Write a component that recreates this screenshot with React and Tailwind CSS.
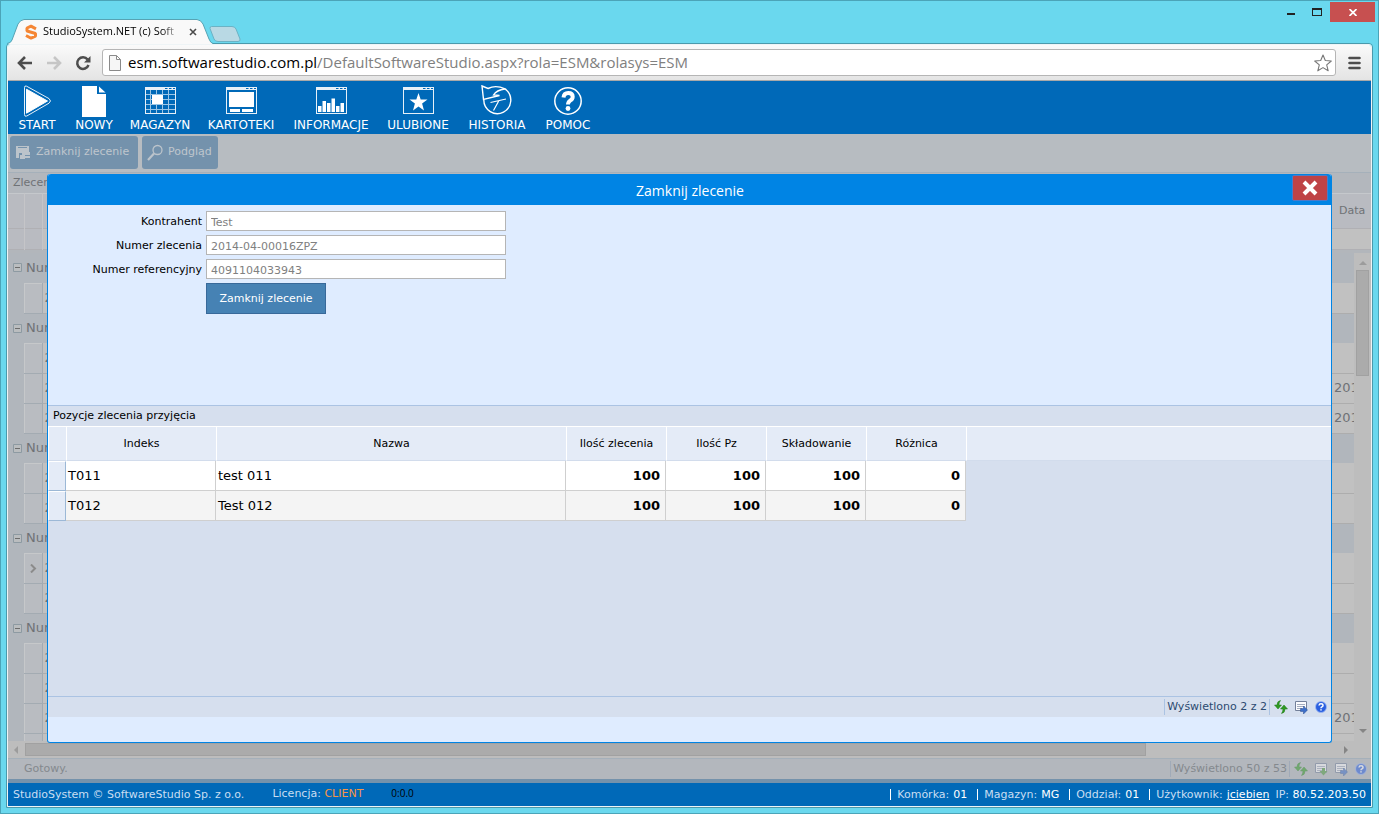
import { useState } from "react";

const orders = [
    { group: "Num", rows: [{ nr: "2", data: "" }] },
    { group: "Num", rows: [{ nr: "2", data: "" }, { nr: "2", data: "201" }, { nr: "2", data: "201" }] },
    { group: "Num", rows: [{ nr: "2", data: "" }, { nr: "2", data: "" }] },
    { group: "Num", rows: [{ nr: "2", data: "", active: true }, { nr: "2", data: "" }] },
    { group: "Num", rows: [{ nr: "2", data: "" }, { nr: "2", data: "" }, { nr: "2", data: "201" }, { nr: "", data: "" }] },
];

const positions = [
    { index: "T011", name: "test 011", values: [100, 100, 100, 0] },
    { index: "T012", name: "Test 012", values: [100, 100, 100, 0] },
];

/* ---------- main menu icons ---------- */

function StartIcon() {
    return (
        <svg className="size-8" viewBox="0 0 32 32" fill="none" stroke="#fff">
            <path d="M3.500 2.600Q3.500 .2 5.600 1.200L28 13.600Q31 16 28 18.200L5.800 31Q3.500 32 3.500 29.500Z" strokeWidth=".9" />
            <path d="M5.500 4.200L26.500 16L5.500 28.200Z" fill="#fff" strokeLinejoin="round" />
        </svg>
    );
}

function NewIcon() {
    return (
        <svg className="size-8" viewBox="0 0 32 32" fill="#fff">
            <path d="M4 1H19V9H28V32H4Z" />
            <path d="M21 1.500L27.500 7.500H21Z" />
        </svg>
    );
}

function WindowFrame({ children }) {
    return (
        <svg className="size-8" viewBox="0 0 32 32" fill="#fff">
            <path d="M1 2H32V29H1ZM2 5V28H31V5Z" fillRule="evenodd" fillOpacity=".9" />
            <path d="M21 3H23.500V4H21ZM25 3H27.500V4H25ZM29 3H31V4H29Z" fill="#0069b8" />
            {children}
        </svg>
    );
}

function WarehouseIcon() {
    return (
        <WindowFrame>
            <path d="M6.500 5V28M12.500 5V28M18.500 5V28M24.500 5V28M2 9.500H31M2 14.500H31M2 19.500H31M2 24.500H31" stroke="#9cc6e6" strokeWidth="1" />
            <path d="M8 10H19V19H8Z" />
        </WindowFrame>
    );
}

function FilesIcon() {
    return (
        <WindowFrame>
            <path d="M4 7H29V22H4Z" />
            <path d="M5 24H15V27H5ZM17 24H28V27H17Z" />
        </WindowFrame>
    );
}

function ChartIcon() {
    return (
        <WindowFrame>
            <path d="M3 21H6.500V27H3ZM7.500 16H11V27H7.500ZM12 18H15.500V27H12ZM16.500 13.500H20V27H16.500ZM21 21H24.500V27H21ZM25.500 18H29V27H25.500Z" />
        </WindowFrame>
    );
}

function FavouriteIcon() {
    return (
        <WindowFrame>
            <path d="M16.500 8L18.700 14.400H25.500L20.100 18.500L22 25.500L16.500 21.400L11 25.500L12.900 18.500L7.500 14.400H14.300Z" />
        </WindowFrame>
    );
}

function HistoryIcon() {
    return (
        <svg className="size-8" viewBox="0 0 32 32" fill="none" stroke="#fff" strokeWidth="1.400">
            <path d="M2.800 15A13.500 13.500 0 1 0 24 4" />
            <path d="M1 1L7 3.500Q15 -.5 24 4Q15.500 5 12.500 10L18.500 10.500L2.500 14.500Z" />
            <path d="M25 14L9.500 17.500M18 15.500L12.500 25.500" strokeWidth="1.200" />
        </svg>
    );
}

function HelpIcon() {
    return (
        <svg className="size-8" viewBox="0 0 32 32" fill="none" stroke="#fff">
            <circle cx="16" cy="16" r="13.200" strokeWidth="1.500" />
            <path d="M11.500 12.500Q12 8 16.200 8Q20.700 8 20.700 11.800Q20.700 14.200 18.200 15.600Q16 17 16 19.500" strokeWidth="4" />
            <circle cx="16" cy="23.500" r="2.400" fill="#fff" stroke="none" />
        </svg>
    );
}

const menu = [
    { label: "START", Icon: StartIcon, width: "w-[38px]" },
    { label: "NOWY", Icon: NewIcon, width: "w-[36px]" },
    { label: "MAGAZYN", Icon: WarehouseIcon, width: "w-[56px]" },
    { label: "KARTOTEKI", Icon: FilesIcon, width: "w-[66px]" },
    { label: "INFORMACJE", Icon: ChartIcon, width: "w-[74px]" },
    { label: "ULUBIONE", Icon: FavouriteIcon, width: "w-[60px]" },
    { label: "HISTORIA", Icon: HistoryIcon, width: "w-[58px]" },
    { label: "POMOC", Icon: HelpIcon, width: "w-[44px]" },
];

/* ---------- status bar icons ---------- */

function RefreshIcon() {
    return (
        <svg className="size-4" viewBox="0 0 16 16" fill="#2f9a22" stroke="#1f7a18" strokeWidth=".5">
            <path d="M7.500 1.500Q4 2 4 6H1.500L5 10L8.500 6H6Q6 3.500 7.500 1.500Z" />
            <path d="M8.500 14.500Q12 14 12 10H14.500L11 6L7.500 10H10Q10 12.500 8.500 14.500Z" />
        </svg>
    );
}

function NoteIcon({ down }) {
    return (
        <svg className="size-4" viewBox="0 0 16 16">
            <path d="M2.500 2.500H13.500V11.500H2.500Z" fill="#fbfbfd" stroke="#73809a" />
            <path d="M4 5.500H12M4 7.500H12M4 9.500H9" stroke="#a4adbf" />
            {down ? (
                <path d="M9 7H12V10H14.500L10.500 14.500L6.500 10H9Z" fill="#4d9a3f" />
            ) : (
                <path d="M7.500 9.500H10.500V7L14.500 11L10.500 15V12.500H7.500Z" fill="#3c6fc9" stroke="#2b4f94" strokeWidth=".5" />
            )}
        </svg>
    );
}

function InfoIcon() {
    return (
        <svg className="size-4" viewBox="0 0 16 16" fill="none">
            <circle cx="8" cy="8" r="5.500" fill="#2a5fe0" stroke="#9db8f2" strokeWidth=".8" />
            <path d="M6 6.500Q6.200 4.700 8 4.700Q10 4.700 10 6.400Q10 7.300 8.900 7.900Q8 8.400 8 9.300" stroke="#fff" strokeWidth="1.500" />
            <path d="M7.200 10.200H8.800V11.600H7.200Z" fill="#fff" />
        </svg>
    );
}

/* ---------- browser window ---------- */

function TitleBar() {
    return (
        <div className="h-[42px] flex items-start justify-between pl-px">
            <div className="flex items-end h-[43px]">
                <div className="relative z-10 w-[206px] h-[25px] flex items-center gap-1 pl-4 pr-3">
                    <svg className="absolute left-0 top-0 w-[206px] h-[25px]" viewBox="0 0 206 25">
                        <path d="M0 25Q4 24 5 21L11 5Q13 1 17 .5H190Q194 1 196 5L202 20Q203.500 24 206 25Z" fill="#f9f9f9" />
                        <path d="M0 24.500Q4 24 5 21L11 5Q13 1 17 .5H190Q194 1 196 5L202 20Q203.500 24 206 24.500" fill="none" stroke="#56a3b4" />
                    </svg>
                    <svg className="relative size-4 shrink-0" viewBox="0 0 16 16" fill="none">
                        <path d="M13 4.800L8 2.200L4 4V7L12.500 9.500V12.200L8 14.200L3 11.500" stroke="#f58634" strokeWidth="3" strokeLinejoin="bevel" />
                    </svg>
                    <span className="relative flex-1 overflow-hidden whitespace-nowrap text-[11px] text-black [mask-image:linear-gradient(90deg,#000_86%,transparent)]">
                        StudioSystem.NET (c) Soft
                    </span>
                    <button aria-label="Zamknij kartę" className="relative size-4 flex items-center justify-center">
                        <svg className="size-2" viewBox="0 0 8 8" stroke="#4a4a4a" strokeWidth="1.600">
                            <path d="M1 1L7 7M7 1L1 7" />
                        </svg>
                    </button>
                </div>
                <button aria-label="Nowa karta" className="-ml-1 mb-0.5">
                    <svg className="w-[32px] h-4" viewBox="0 0 32 16">
                        <path d="M2.500 .5H23Q26 .5 27 3L31 13Q31.500 15.500 29 15.500H9Q6 15.500 5 13L1 2.500Q.8 .5 2.500 .5Z" fill="#b9d9e4" stroke="#6cb2c4" />
                    </svg>
                </button>
            </div>
            <div className="flex items-center">
                <button aria-label="Minimalizuj" className="w-[26px] h-[22px] flex items-center justify-center">
                    <svg className="w-2 h-2" viewBox="0 0 8 8"><path d="M0 5H8V7H0Z" fill="#222" /></svg>
                </button>
                <button aria-label="Maksymalizuj" className="w-[26px] h-5 flex items-center justify-center">
                    <svg className="w-[10px] h-2" viewBox="0 0 10 8"><path d="M0 0H10V8H0ZM1 2V7H9V2Z" fill="#222" fillRule="evenodd" /></svg>
                </button>
                <button aria-label="Zamknij" className="w-[45px] h-5 -mr-0.5 bg-[#c75050] flex items-center justify-center">
                    <svg className="w-2 h-[7px]" viewBox="0 0 8 7" stroke="#fff" strokeWidth="1.700"><path d="M.5 0L7.500 7M7.500 0L.5 7" /></svg>
                </button>
            </div>
        </div>
    );
}

function AddressBar() {
    return (
        <div className="h-9 shrink-0 flex items-center pl-[9px] pr-[9px] border-b border-[#a9a9a9] bg-linear-to-b from-[#fafafa] to-[#e4e4e4]">
            <button aria-label="Wstecz" className="w-[29px]">
                <svg className="w-4 h-4" viewBox="0 0 16 16" fill="none" stroke="#4d4d4d" strokeWidth="2.600">
                    <path d="M15 8H2.500M8 2L2 8L8 14" />
                </svg>
            </button>
            <button aria-label="Dalej" className="w-[29px]">
                <svg className="w-4 h-4" viewBox="0 0 16 16" fill="none" stroke="#c6c6c6" strokeWidth="2.600">
                    <path d="M1 8H13.500M8 2L14 8L8 14" />
                </svg>
            </button>
            <button aria-label="Odśwież" className="w-[27px]">
                <svg className="w-4 h-4" viewBox="0 0 16 16" fill="none">
                    <path d="M12.600 4.500A5.800 5.800 0 1 0 13.500 10" stroke="#4d4d4d" strokeWidth="2.500" />
                    <path d="M15.500 1V7.500H9Z" fill="#4d4d4d" />
                </svg>
            </button>
            <div className="flex-1 h-[27px] flex items-center px-1.5 bg-white border border-[#b5b5b5] rounded-[3px]">
                <svg className="w-3 h-4 shrink-0" viewBox="0 0 12 16" fill="#f6f6f6" stroke="#8a8a8a">
                    <path d="M.5 .5H7.500L11.500 4.500V15.500H.5ZM7.500 .5V4.500H11.500" />
                </svg>
                <a href="#" className="ml-[7px] pb-0.5 flex-1 whitespace-nowrap text-[15px] leading-6 text-[#808080]">
                    <span className="text-black">esm.softwarestudio.com.pl</span>/DefaultSoftwareStudio.aspx?rola=ESM&amp;rolasys=ESM
                </a>
                <button aria-label="Zakładka" className="-mr-[3px]">
                    <svg className="size-[18px]" viewBox="0 0 18 18" fill="#fff" stroke="#777" strokeWidth="1.100" strokeLinejoin="round">
                        <path d="M9 1L11.300 6.500L17.300 7L12.700 10.900L14.200 16.800L9 13.600L3.800 16.800L5.300 10.900L.7 7L6.700 6.500Z" />
                    </svg>
                </button>
            </div>
            <button aria-label="Menu" className="ml-[11px]">
                <svg className="w-[15px] h-[14px]" viewBox="0 0 15 14" stroke="#4d4d4d" strokeWidth="2.600" strokeLinecap="round">
                    <path d="M2.500 2H12.500M2.500 7H12.500M2.500 12H12.500" />
                </svg>
            </button>
        </div>
    );
}

/* ---------- application ---------- */

function MainMenu() {
    return (
        <nav className="h-[53px] shrink-0 flex gap-5 px-2.5 pt-1 bg-[#0069b8] text-white">
            {menu.map(({ label, Icon, width }) => (
                <button key={label} className={`${width} shrink-0 flex flex-col items-center`}>
                    <Icon />
                    <span className="text-[12px] leading-4 whitespace-nowrap">{label}</span>
                </button>
            ))}
        </nav>
    );
}

function OrdersGrid() {
    return (
        <div className="flex-1 min-h-0 flex flex-col text-[#6f7276]">
            <div className="h-5 shrink-0 px-[5px] text-[11px] leading-5 bg-[#b3b7bd]">Zlecenia</div>
            <table className="w-full table-fixed border-collapse text-[11px]">
                <thead>
                    <tr className="h-[35px] bg-[#b9bbc1] border-t border-[#c5c8cc]">
                        <th className="w-[16px] border-r border-[#c5c5c8]"></th>
                        <th className="w-[18px] border-r border-[#c5c5c8]"></th>
                        <th></th>
                        <th className="w-[39px] p-0 pl-[7px] text-left font-normal whitespace-nowrap overflow-hidden">Data</th>
                    </tr>
                    <tr className="h-[21px] bg-[#c1c1c1] border-y border-[#b0b0b4]">
                        <td className="bg-[#b9bbc1] border-r border-[#c5c5c8]"></td>
                        <td className="bg-[#b9bbc1] border-r border-[#c5c5c8]"></td>
                        <td></td>
                        <td></td>
                    </tr>
                </thead>
            </table>
            <div className="flex-1 min-h-0 pt-[3px] flex bg-[#b2b6bb]">
                <div className="flex-1 min-w-0 overflow-hidden">
                    <table className="w-full table-fixed border-collapse text-[13px]">
                        <colgroup>
                            <col className="w-[16px]" />
                            <col className="w-[18px]" />
                            <col />
                            <col className="w-[22px]" />
                        </colgroup>
                        {orders.map((order, i) => (
                            <tbody key={i}>
                                <tr className="h-[30px] bg-[#b1b6bc]">
                                    <td colSpan={4} className="p-0 pl-[5px]">
                                        <span className="flex items-center gap-1">
                                            <svg className="size-[9px]" viewBox="0 0 9 9" fill="#babdbf" stroke="#8d9aa2">
                                                <path d="M.5 .5H8.500V8.500H.5Z" />
                                                <path d="M2 4.500H7" stroke="#6c6c6c" />
                                            </svg>
                                            {order.group}
                                        </span>
                                    </td>
                                </tr>
                                {order.rows.map((row, j) => (
                                    <tr key={j} className="h-[30px]">
                                        <td className="p-0 bg-[#b1b6bc]"></td>
                                        <td className="p-0 border border-t-[#c6c8ca] border-l-[#c6c8ca] border-b-[#a3abb2] border-r-[#a3abb2] bg-[#b9bcc1]">
                                            {row.active && (
                                                <svg className="mx-auto w-[7px] h-[9px]" viewBox="0 0 7 9" fill="none" stroke="#8b8b8b" strokeWidth="2">
                                                    <path d="M1 .5L5 4.500L1 8.500" />
                                                </svg>
                                            )}
                                        </td>
                                        <td className="p-0 pl-0.5 bg-[#c1c1c1] border-b border-[#adadad]">{row.nr}</td>
                                        <td className="p-0 pl-0.5 bg-[#c1c1c1] border-b border-[#adadad] overflow-hidden whitespace-nowrap">{row.data}</td>
                                    </tr>
                                ))}
                            </tbody>
                        ))}
                    </table>
                </div>
                <div className="w-[17px] shrink-0 flex flex-col items-center justify-between py-2 bg-[#bdbdbd]">
                    <svg className="w-2 h-1" viewBox="0 0 8 4" fill="#9c9c9c"><path d="M4 0L8 4H0Z" /></svg>
                    <div className="mt-[5px] w-[13px] h-[106px] bg-[#ababab] border border-[#a1a1a1]"></div>
                    <div className="flex-1"></div>
                    <svg className="w-2 h-1" viewBox="0 0 8 4" fill="#858585"><path d="M4 4L8 0H0Z" /></svg>
                </div>
            </div>
            <div className="h-[17px] shrink-0 flex items-center pl-1.5 pr-[23px] bg-[#bdbdbd]">
                <svg className="w-1 h-2" viewBox="0 0 4 8" fill="#9c9c9c"><path d="M0 4L4 0V8Z" /></svg>
                <div className="flex-1 ml-[7px]">
                    <div className="w-[85%] h-[13px] bg-[#ababab] border border-[#a1a1a1]"></div>
                </div>
                <svg className="w-1 h-2" viewBox="0 0 4 8" fill="#858585"><path d="M4 4L0 0V8Z" /></svg>
            </div>
            <div className="h-[21px] shrink-0 flex items-center justify-between pl-4 pr-0.5 border-t border-[#a5b0ba] bg-[#b3b7bd] text-[11px] text-[#84898e]">
                <span>Gotowy.</span>
                <div className="flex items-center">
                    <span className="h-4 leading-4 px-0.5 border-x border-[#a0aab8]">Wyświetlono 50 z 53</span>
                    <div className="flex gap-1 pl-[3px] opacity-50">
                        <RefreshIcon />
                        <NoteIcon down />
                        <NoteIcon />
                        <InfoIcon />
                    </div>
                </div>
            </div>
            <div className="h-1 shrink-0 bg-[#7592ab]"></div>
        </div>
    );
}

function OrdersPage() {
    return (
        <div className="flex-1 min-h-0 flex flex-col">
            <div className="h-[39px] shrink-0 flex gap-1 px-0.5 pt-0.5 pb-1 border-b border-[#a5b0ba] bg-[#b7bcc1] text-[11px] text-[#bfc6cc]">
                <button className="w-[128px] h-[33px] flex items-center gap-1 pl-1.5 rounded-[3px] bg-[#7492ac]">
                    <svg className="size-4" viewBox="0 0 16 16" fill="#bcc4cb">
                        <path d="M0 1H13V6H0ZM2 2V3H11V2ZM0 8H3V13H0Z" fillRule="evenodd" />
                        <path d="M0 6H13V8H0ZM4 10H9V14H4ZM6 7H14V10H6ZM9 11H14V13H9Z" />
                    </svg>
                    Zamknij zlecenie
                </button>
                <button className="w-[76px] h-[33px] flex items-center gap-1 pl-1 rounded-[3px] bg-[#7492ac]">
                    <svg className="size-[18px]" viewBox="0 0 18 18" fill="none" stroke="#bcc4cb">
                        <circle cx="11.500" cy="6" r="4.500" strokeWidth="1.300" />
                        <path d="M8 9.500L2 16" strokeWidth="2.200" />
                    </svg>
                    Podgląd
                </button>
            </div>
            <OrdersGrid />
        </div>
    );
}

function Field({ id, label, value }) {
    return (
        <>
            <label htmlFor={id} className="text-right leading-[21px] h-5">{label}</label>
            <input
                id={id}
                readOnly
                value={value}
                className="w-[300px] h-5 px-1 pt-0.5 bg-white border border-[#b5b5b5] text-[#808080] outline-none"
            />
        </>
    );
}

function CloseOrderDialog({ onClose }) {
    return (
        <div
            role="dialog"
            aria-label="Zamknij zlecenie"
            className="absolute inset-x-[39px] top-10 bottom-10 flex flex-col rounded-[3px] border border-t-0 border-[#0084e4] bg-[#dfecff] text-black"
        >
            <div className="h-[31px] shrink-0 flex items-center pl-10 pr-[3px] bg-[#0084e4] rounded-t-[3px]">
                <h2 className="flex-1 pt-0.5 text-center font-['Open_Sans','Noto_Sans',sans-serif] text-[14px] text-white">Zamknij zlecenie</h2>
                <button
                    aria-label="Zamknij"
                    onClick={onClose}
                    className="mb-1 w-9 h-[26px] flex items-center justify-center bg-[#bf4346] border border-[#4c79c8] rounded-[2px]"
                >
                    <svg className="size-4" viewBox="0 0 16 16" stroke="#fff" strokeWidth="4">
                        <path d="M2 2L14 14M14 2L2 14" />
                    </svg>
                </button>
            </div>

            <form className="h-[200px] shrink-0 grid grid-cols-[154px_auto] justify-start content-start gap-1 pt-1.5 text-[11px]">
                <Field id="kontrahent" label="Kontrahent" value="Test" />
                <Field id="numer" label="Numer zlecenia" value="2014-04-00016ZPZ" />
                <Field id="referencja" label="Numer referencyjny" value="4091104033943" />
                <button
                    type="button"
                    className="col-start-2 w-[120px] h-[31px] pt-0.5 bg-[#4682b4] border border-[#38699a] text-white"
                >
                    Zamknij zlecenie
                </button>
            </form>

            <div className="flex-1 min-h-0 border-t border-[#abc3e3] bg-[#d6dfee]">
                <h3 className="h-5 px-[5px] text-[11px] leading-5">Pozycje zlecenia przyjęcia</h3>
                <table className="w-full table-fixed border-separate border-spacing-0 text-[13px]">
                    <thead>
                        <tr className="h-[35px] bg-[#e4ebf7] text-[11px] *:p-0 *:pt-0.5 *:font-normal *:border-t *:border-l *:border-white *:border-b *:border-b-[#d2dcec]">
                            <th className="w-[18px]"></th>
                            <th className="w-[150px]">Indeks</th>
                            <th className="w-[350px]">Nazwa</th>
                            <th className="w-[100px]">Ilość zlecenia</th>
                            <th className="w-[100px]">Ilość Pz</th>
                            <th className="w-[100px]">Składowanie</th>
                            <th className="w-[100px]">Różnica</th>
                            <th></th>
                        </tr>
                    </thead>
                    <tbody>
                        {positions.map((row) => (
                            <tr key={row.index} className="h-[30px] group">
                                <td className="p-0 bg-[#e4ebf7] border border-t-white border-l-white border-r-[#9cb8d6] border-b-[#9cb8d6]"></td>
                                <td className="p-0 pl-0.5 bg-white group-even:bg-[#f4f4f4] border-r border-b border-[#cfcfcf]">{row.index}</td>
                                <td className="p-0 pl-0.5 bg-white group-even:bg-[#f4f4f4] border-r border-b border-[#cfcfcf]">{row.name}</td>
                                {row.values.map((value, i) => (
                                    <td key={i} className="p-0 pr-[5px] text-right font-bold bg-white group-even:bg-[#f4f4f4] border-r border-b border-[#cfcfcf]">
                                        {value}
                                    </td>
                                ))}
                                <td></td>
                            </tr>
                        ))}
                    </tbody>
                </table>
            </div>
            <div className="h-[21px] shrink-0 flex items-center justify-end pr-0.5 border-t border-[#abc3e3] bg-[#d6dfee] text-[11px] text-[#2c4a70]">
                <span className="h-4 leading-4 px-0.5 border-x border-[#abc3e3]">Wyświetlono 2 z 2</span>
                <div className="flex gap-1 pl-[3px]">
                    <RefreshIcon />
                    <NoteIcon />
                    <InfoIcon />
                </div>
            </div>
            <div className="h-[25px] shrink-0"></div>
        </div>
    );
}

function FooterItem({ label, value }) {
    return (
        <span className="flex items-center gap-1">
            <span className="mr-0.5 mb-0.5 h-[11px] border-l border-white"></span>
            {label} <span className="text-white">{value}</span>
        </span>
    );
}

function Footer() {
    return (
        <footer className="h-[23px] shrink-0 flex items-center justify-between px-[5px] bg-[#0069b8] text-[11px] text-[#c9def2] whitespace-nowrap">
            <div className="flex items-center gap-7">
                <span className="pt-0.5">StudioSystem © SoftwareStudio Sp. z o.o.</span>
                <span>
                    Licencja: <span className="text-[#f79646]">CLIENT</span>
                </span>
                <span className="pb-0.5 font-['Open_Sans','Noto_Sans',sans-serif] text-[10px] text-black">0:0.0</span>
            </div>
            <div className="flex items-center gap-2.5 pt-0.5">
                <FooterItem label="Komórka:" value="01" />
                <FooterItem label="Magazyn:" value="MG" />
                <FooterItem label="Oddział:" value="01" />
                <FooterItem label="Użytkownik:" value={<a href="#" className="underline">jciebien</a>} />
                <span className="-ml-1">
                    IP: <span className="text-white">80.52.203.50</span>
                </span>
            </div>
        </footer>
    );
}

export default function App() {
    const [open, setOpen] = useState(true);

    return (
        <div className="h-screen flex flex-col px-[5px] pb-[5px] border border-[#4ba4b8] bg-[#6ad8ee] font-['Open_Sans','Noto_Sans',sans-serif]">
            <TitleBar />
            <div className="flex-1 min-h-0 flex flex-col border border-[#4a9aac] rounded-t-[4px]">
                <div className="flex-1 min-h-0 flex flex-col border border-[#eef4f6] rounded-t-[3px] overflow-hidden">
                    <AddressBar />
                    <div className="flex-1 min-h-0 flex flex-col font-['DejaVu_Sans',sans-serif]">
                        <MainMenu />
                        <div className="relative flex-1 min-h-0 flex flex-col">
                            <OrdersPage />
                            {open && <CloseOrderDialog onClose={() => setOpen(false)} />}
                        </div>
                        <Footer />
                    </div>
                </div>
            </div>
        </div>
    );
}
